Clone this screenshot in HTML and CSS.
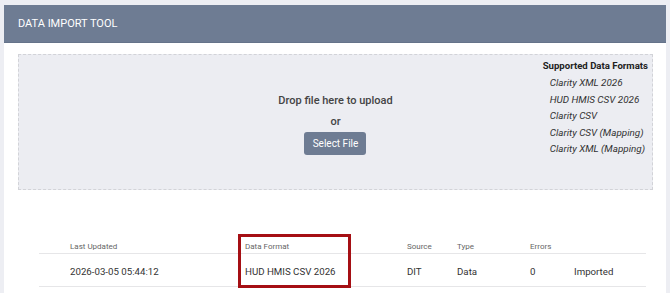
FILE: index.html
```html
<!DOCTYPE html>
<html>
<head>
<meta charset="utf-8">
<link rel="stylesheet" href="styles.css">
</head>
<body>
<div class="card">
  <div class="card-header">DATA IMPORT TOOL</div>
  <div class="card-body">
    <div class="dropzone">
      <div class="spacer"></div>
      <div class="drop-center">
        <div class="drop-title">Drop file here to upload</div>
        <div class="drop-or">or</div>
        <button class="btn">Select File</button>
      </div>
      <div class="formats">
        <div class="formats-title">Supported Data Formats</div>
        <ul class="formats-list">
          <li>Clarity XML 2026</li>
          <li>HUD HMIS CSV 2026</li>
          <li>Clarity CSV</li>
          <li>Clarity CSV (Mapping)</li>
          <li>Clarity XML (Mapping)</li>
        </ul>
      </div>
    </div>
    <div class="table">
      <div class="row head">
        <div class="cell"></div>
        <div class="cell">Last Updated</div>
        <div class="cell">Data Format</div>
        <div class="cell">Source</div>
        <div class="cell">Type</div>
        <div class="cell">Errors</div>
        <div class="cell"></div>
      </div>
      <div class="row">
        <div class="cell"></div>
        <div class="cell">2026-03-05 05:44:12</div>
        <div class="cell">HUD HMIS CSV 2026</div>
        <div class="cell">DIT</div>
        <div class="cell">Data</div>
        <div class="cell">0</div>
        <div class="cell">Imported</div>
      </div>
      <div class="highlight"></div>
    </div>
  </div>
</div>
</body>
</html>
```
FILE: styles.css
```css
* { box-sizing: border-box; }
body {
  margin: 0;
  padding: 5px 4px 0 4px;
  background: #edeef3;
  font-family: Roboto, "Liberation Sans", sans-serif;
  color: #333;
  height: 293px;
  overflow: hidden;
}
.card {
  width: 662px;
  background: #fff;
  height: 300px;
}
.card-header {
  height: 38px;
  background: #6e7c93;
  color: #fff;
  font-size: 11px;
  padding-left: 14px;
  display: flex;
  align-items: center;
  border-bottom: 1px solid #65738a;
}
.card-body {
  padding: 11px 13px 0 14px;
}
.dropzone {
  height: 136px;
  background: #ecedf2;
  border: 1px dashed #d2d3d8;
  display: grid;
  grid-template-columns: 1fr auto 1fr;
  padding: 4px 0 0 0;
}
.drop-center {
  align-self: center;
  display: flex;
  flex-direction: column;
  align-items: center;
}
.drop-title {
  font-size: 11px;
  font-weight: 500;
  color: #444;
}
.drop-or {
  font-size: 11px;
  font-weight: 500;
  color: #444;
  margin-top: 8px;
}
.btn {
  margin-top: 4px;
  height: 23px;
  width: 62px;
  border: none;
  border-radius: 3px;
  background: #6e7c93;
  color: #fff;
  font-family: Roboto, "Liberation Sans", sans-serif;
  font-size: 10px;
  padding: 0;
}
.formats {
  justify-self: end;
  margin-right: 4px;
}
.formats-title {
  font-size: 9.6px;
  font-weight: 700;
  color: #222;
  line-height: 14px;
}
.formats-list {
  list-style: none;
  margin: 2px 0 0 0;
  padding: 0 0 0 7px;
  font-size: 9.9px;
  font-style: italic;
  color: #333;
}
.formats-list li {
  line-height: 16.5px;
}
.table {
  position: relative;
  margin: 44px 7px 0 21px;
}
.row {
  display: grid;
  grid-template-columns: 31px 175px 162px 50px 73px 44px 1fr;
  border-bottom: 1px solid #e6e6e8;
  align-items: center;
}
.row.head {
  height: 20px;
  font-size: 8px;
  color: #666;
  padding-top: 6px;
}
.row:not(.head) {
  height: 33px;
  font-size: 9.7px;
  color: #333;
  padding-top: 3px;
}
.highlight {
  position: absolute;
  left: 199px;
  top: 0;
  width: 113px;
  height: 54px;
  border: 3px solid #a50f14;
}
```
